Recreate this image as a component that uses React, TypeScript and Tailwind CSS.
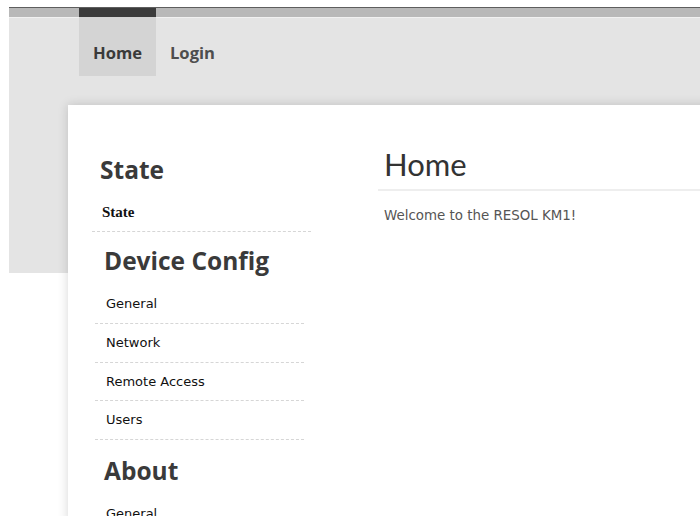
import React from 'react';

interface NavSection {
  title: string;
  links: string[];
}

const sections: NavSection[] = [
  { title: 'Device Config', links: ['General', 'Network', 'Remote Access', 'Users'] },
  { title: 'About', links: ['General'] },
];

const headingFont = { fontFamily: '"Open Sans", "DejaVu Sans", sans-serif' };

const SideLink: React.FC<{ label: string }> = ({ label }) => (
  <div className="border-b border-dashed border-[#d6d6d6] pl-[11px] pt-[9px] pb-[8.67px] text-[13px] leading-[20px] text-[#111] font-['DejaVu_Sans',sans-serif]">
    {label}
  </div>
);

const App: React.FC = () => {
  return (
    <div className="w-[700px] h-[516px] overflow-hidden bg-white">
      {/* top band with the tab navigation */}
      <div className="mt-[7px] ml-[9px] h-[266px] bg-[#e4e4e4] flex flex-col">
        <div className="h-px bg-[#5e5e5e]" />
        <div className="h-[9px] bg-[#b8b8b8]" />
        <div className="h-px bg-[#f1f1f1]" />
        <nav className="-mt-[10px] flex pl-[70px]" style={headingFont}>
          <a className="h-[68px] w-[77px] border-t-[9px] border-[#3b3b3b] bg-[#d4d4d4] pl-[14px] pt-[23.5px] text-[16.6px] leading-[24px] font-bold text-[#3a3a3a]">
            Home
          </a>
          <a className="h-[68px] px-[14px] pt-[32.5px] text-[16.6px] leading-[24px] font-bold text-[#4e4e4e]">
            Login
          </a>
        </nav>
      </div>

      {/* content card */}
      <div className="-mt-[168px] ml-[68px] w-[680px] h-[420px] bg-white shadow-[0_0_10px_rgba(0,0,0,0.16)] flex">
        <aside className="ml-[24px] w-[219px] pt-[49.6px]">
          <div>
            <h2 className="pl-[8px] text-[24.5px] leading-[30px] font-bold text-[#3a3a3a] mb-[8.4px]" style={headingFont}>
              State
            </h2>
            <div className="border-b border-dashed border-[#d6d6d6] pl-[10px] pt-[9px] pb-[9px] text-[15px] leading-[20px] font-bold text-[#111] font-['Liberation_Serif',serif]">
              State
            </div>
          </div>
          {sections.map((s, i) => (
            <div key={s.title} className="ml-[3px] mr-[7px]">
              <h2
                className={
                  'pl-[9px] text-[24.5px] leading-[30px] font-bold text-[#3a3a3a] mb-[9.5px] ' +
                  (i === 0 ? 'mt-[14px]' : 'mt-[15.5px]')
                }
                style={headingFont}
              >
                {s.title}
              </h2>
              {s.links.map((l) => (
                <SideLink key={l} label={l} />
              ))}
            </div>
          ))}
        </aside>

        <main className="ml-[67px] flex-1 pt-[41px]">
          <div className="border-b-2 border-[#eeeeee] pl-[6px] pb-[7px]">
            <h1 className="text-[31px] leading-[36px] font-normal text-[#333] font-['Lato',sans-serif]">Home</h1>
          </div>
          <p className="pl-[6px] mt-[15px] text-[13.4px] leading-[20px] text-[#555] font-['DejaVu_Sans',sans-serif]">
            Welcome to the RESOL KM1!
          </p>
        </main>
      </div>
    </div>
  );
};

export default App;
